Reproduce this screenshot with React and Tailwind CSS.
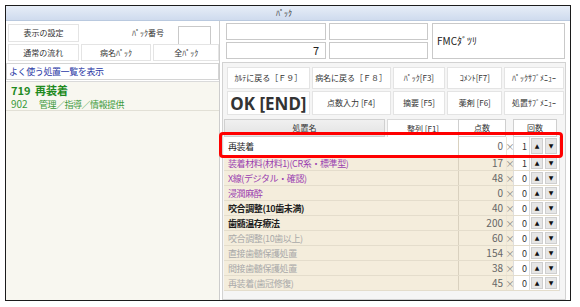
import React from 'react'

const rows = [
	{ name: '再装着', pts: 0, cnt: 1, tone: 'text-[#222]', bg: 'bg-white', h: 'h-[19px]' },
	{ name: '装着材料(材料1)(CR系・標準型)', pts: 17, cnt: 1, tone: 'text-[#9a3db0]' },
	{ name: 'X線(デジタル・確認)', pts: 48, cnt: 0, tone: 'text-[#9a3db0]' },
	{ name: '浸潤麻酔', pts: 0, cnt: 0, tone: 'text-[#9a3db0]' },
	{ name: '咬合調整(10歯未満)', pts: 40, cnt: 0, tone: 'text-[#1e1e1e] font-semibold' },
	{ name: '歯髄温存療法', pts: 200, cnt: 0, tone: 'text-[#1e1e1e] font-semibold' },
	{ name: '咬合調整(10歯以上)', pts: 60, cnt: 0, tone: 'text-[#a9a9a9]' },
	{ name: '直接歯髄保護処置', pts: 154, cnt: 0, tone: 'text-[#a9a9a9]' },
	{ name: '間接歯髄保護処置', pts: 38, cnt: 0, tone: 'text-[#a9a9a9]' },
	{ name: '再装着(歯冠修復)', pts: 45, cnt: 0, tone: 'text-[#a9a9a9]' },
]

const Btn = ({ className = '', children }) => (
	<div className={`flex items-center justify-center bg-white border border-[#e4e4e4] text-[#333] ${className}`}>
		{children}
	</div>
)

const Field = ({ className = '', children }) => (
	<div className={`bg-white border border-[#c9c9c9] flex items-center ${className}`}>{children}</div>
)

const Row = ({ r }) => (
	<div className={`flex ${r.h || 'h-[15px]'} border-b border-[#e4ddcc]`}>
		<div className={`w-[234px] flex items-center pl-[4px] text-[9px] tracking-[-0.4px] ${r.bg || 'bg-[#f4eddc]'} ${r.tone}`}>
			{r.name}
		</div>
		<div className={`w-[48px] flex items-center justify-end pr-[3px] border-l border-[#d9d1bf] text-[10px] text-[#666] ${r.bg || 'bg-[#f4eddc]'}`}>
			{r.pts}
		</div>
		<div className={`w-[7px] flex items-center justify-center text-[9px] text-[#888] border-l border-[#ece6d8] ${r.bg || 'bg-[#f4eddc]'}`}>
			×
		</div>
		<div className="w-[17px] flex items-center justify-end pr-[2px] bg-white border-x border-[#dedede] text-[9px] text-[#333]">
			{r.cnt}
		</div>
		<div className="ml-[1px] w-[12px] my-[1px] flex items-center justify-center bg-[#e6e6e6] border border-[#cfcfcf] text-[6px] text-[#111] font-['DejaVu_Sans']">
			▲
		</div>
		<div className="ml-[2px] w-[12px] my-[1px] flex items-center justify-center bg-[#e6e6e6] border border-[#cfcfcf] text-[6px] text-[#111] font-['DejaVu_Sans']">
			▼
		</div>
	</div>
)

export default function App() {
	return (
		<div className="relative w-[580px] h-[307px] bg-white overflow-hidden font-['Noto_Sans_CJK_JP','Noto_Sans',sans-serif] leading-none">
			<div className="ml-[5px] mt-[5px] w-[566px] h-[296px] border border-[#1c1c1c] flex flex-col">
				{/* title */}
				<div className="h-[15px] shrink-0 bg-linear-to-b from-[#e6edf7] to-[#cfdbee] border-b border-[#b9c9df] flex items-center justify-center pr-[8px] text-[8px] text-[#333]">
					ﾊﾟｯｸ
				</div>

				<div className="flex-1 flex min-h-0">
					{/* left panel */}
					<div className="w-[214px] flex flex-col border-r border-[#cdcdcd]">
						<div className="flex h-[20px] mt-[3px]">
							<Btn className="ml-[2px] w-[71px] h-[18px] text-[8px]">表示の設定</Btn>
							<div className="w-[85px] h-[18px] flex items-center justify-end text-[8px] text-[#333]">ﾊﾟｯｸ番号</div>
							<Field className="ml-[14px] mt-[2px] w-[33px] h-[19px]" />
						</div>
						<div className="flex h-[17px] gap-[2px] ml-[2px]">
							<Btn className="w-[71px] h-[17px] text-[8px]">通常の流れ</Btn>
							<Btn className="w-[71px] h-[17px] text-[8px]">病名ﾊﾟｯｸ</Btn>
							<Btn className="w-[66px] h-[17px] text-[8px]">全ﾊﾟｯｸ</Btn>
						</div>
						<div className="mt-[2px] h-[17px] bg-white border border-[#d4d4d4] flex items-center pl-[2px] text-[9px] tracking-[-0.4px] text-[#2b3aa6]">
							よく使う処置一覧を表示
						</div>
						<div className="mt-[1px] flex-1 bg-[#f8f7f0] border-t border-[#dadada]">
							<div className="h-[16px] flex items-center pl-[5px] text-[11px] font-bold text-[#1f8a1f]">
								<span className="w-[24px]">719</span>
								<span>再装着</span>
							</div>
							<div className="h-[13px] flex items-center pl-[5px] border-b border-[#e2e0d6] text-[9px] text-[#3b9a3b]">
								<span className="w-[28px] text-[10px]">902</span>
								<span className="tracking-[-0.5px]">管理／指導／情報提供</span>
							</div>
						</div>
					</div>

					{/* right panel */}
					<div className="ml-[2px] w-[348px] flex flex-col pr-[4px]">
						<div className="flex mt-[2px] pl-[4px]">
							<div className="grid grid-cols-[100px_99px] gap-x-[3px] gap-y-[2px]">
								<Field className="h-[17px]" />
								<Field className="h-[17px]" />
								<Field className="h-[17px] justify-end pr-[6px] text-[11px] text-[#222]">7</Field>
								<Field className="h-[17px]" />
							</div>
							<Field className="ml-[4px] w-[133px] h-[36px] pl-[4px] text-[10px] text-[#222]">FMCﾀﾞﾂﾘ</Field>
						</div>

						<div className="mt-[3px] flex-1 border border-[#d2d2d2] bg-[#f5f5f5] flex flex-col px-[1px]">
							<div className="ml-[3px] mt-[4px] flex flex-col gap-[2px]">
								<div className="flex gap-[2px] h-[22px] text-[8px]">
									<Btn className="w-[83px]">ｶﾙﾃに戻る［Ｆ９］</Btn>
									<Btn className="w-[79px]">病名に戻る［Ｆ８］</Btn>
									<Btn className="w-[53px]">ﾊﾟｯｸ[F3]</Btn>
									<Btn className="w-[55px]">ｺﾒﾝﾄ[F7]</Btn>
									<Btn className="w-[60px]">ﾊﾟｯｸｻﾌﾞﾒﾆｭｰ</Btn>
								</div>
								<div className="flex gap-[2px] h-[24px] text-[8px]">
									<Btn className="w-[83px] font-['Noto_Sans'] font-bold text-[17px] text-[#1c2290]">OK [END]</Btn>
									<Btn className="w-[79px]">点数入力 [F4]</Btn>
									<Btn className="w-[53px]">摘要 [F5]</Btn>
									<Btn className="w-[55px]">薬剤 [F6]</Btn>
									<Btn className="w-[60px]">処置ｻﾌﾞﾒﾆｭｰ</Btn>
								</div>
							</div>

							{/* table header */}
							<div className="mt-[4px] flex h-[18px] text-[8px] text-[#333]">
								<div className="w-[161px] flex items-center justify-center bg-linear-to-b from-[#f0f0f0] to-[#e3e3e3] border border-[#d0d0d0]">
									処置名
								</div>
								<div className="ml-[2px] w-[71px] flex items-center justify-center bg-white border-t border-l border-[#dadada]">
									整列 [F1]
								</div>
								<div className="w-[48px] flex items-center justify-center bg-white border border-[#cfcfcf]">
									点数
								</div>
								<div className="ml-[7px] w-[44px] flex items-center justify-center bg-white border border-[#cfcfcf]">
									回数
								</div>
							</div>

							{/* rows */}
							<div className="w-[336px] bg-white border-r border-[#dcdcdc]">
								{rows.map((r, i) => (
									<Row key={i} r={r} />
								))}
							</div>
						</div>
					</div>
				</div>
			</div>

			{/* highlight annotation */}
			<div className="absolute left-[219px] top-[132px] w-[344px] h-[26px] border-[3px] border-[#ff0000] rounded-[4px]" />
		</div>
	)
}
